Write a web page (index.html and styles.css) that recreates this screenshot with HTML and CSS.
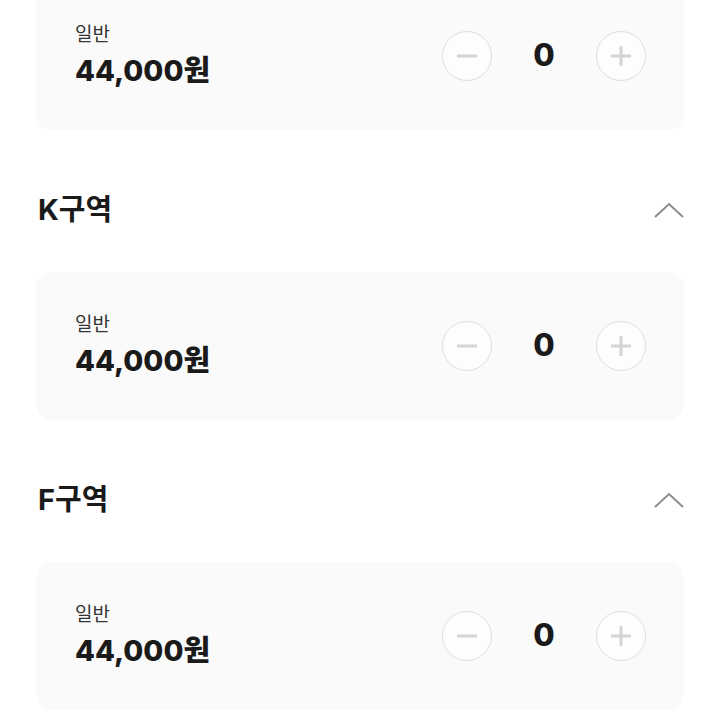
FILE: index.html
```html
<!DOCTYPE html>
<html lang="ko">
<head>
<meta charset="utf-8">
<link rel="stylesheet" href="styles.css">
</head>
<body>
<div class="page">
  <div class="card first">
    <div class="info">
      <div class="label">일반</div>
      <div class="price">44,000원</div>
    </div>
    <div class="stepper">
      <button class="btn"><svg viewBox="0 0 20 20" width="20" height="20"><path d="M0 10H20" /></svg></button>
      <div class="count">0</div>
      <button class="btn"><svg viewBox="0 0 20 20" width="20" height="20"><path d="M0 10H20M10 0V20" /></svg></button>
    </div>
  </div>

  <div class="section-head">
    <h2 class="title">K구역</h2>
    <svg class="chev" viewBox="0 0 30 16" width="30" height="16"><path d="M1 15L15 2L29 15" /></svg>
  </div>
  <div class="card">
    <div class="info">
      <div class="label">일반</div>
      <div class="price">44,000원</div>
    </div>
    <div class="stepper">
      <button class="btn"><svg viewBox="0 0 20 20" width="20" height="20"><path d="M0 10H20" /></svg></button>
      <div class="count">0</div>
      <button class="btn"><svg viewBox="0 0 20 20" width="20" height="20"><path d="M0 10H20M10 0V20" /></svg></button>
    </div>
  </div>

  <div class="section-head">
    <h2 class="title">F구역</h2>
    <svg class="chev" viewBox="0 0 30 16" width="30" height="16"><path d="M1 15L15 2L29 15" /></svg>
  </div>
  <div class="card">
    <div class="info">
      <div class="label">일반</div>
      <div class="price">44,000원</div>
    </div>
    <div class="stepper">
      <button class="btn"><svg viewBox="0 0 20 20" width="20" height="20"><path d="M0 10H20" /></svg></button>
      <div class="count">0</div>
      <button class="btn"><svg viewBox="0 0 20 20" width="20" height="20"><path d="M0 10H20M10 0V20" /></svg></button>
    </div>
  </div>
</div>
</body>
</html>
```

FILE: styles.css
```css
html, body {
  margin: 0;
  padding: 0;
  background: #ffffff;
  overflow: hidden;
}
body {
  font-family: "Noto Sans CJK KR", "Noto Sans", sans-serif;
  color: #1a1a1a;
}
.page {
  padding: 0 37px 0 36px;
}
.card {
  height: 148px;
  box-sizing: border-box;
  background: #fafafa;
  border-radius: 16px;
  padding: 0 38px 0 39px;
  display: flex;
  align-items: center;
  justify-content: space-between;
}
.card.first {
  margin-top: -18px;
}
.info {
  display: flex;
  flex-direction: column;
  gap: 8px;
  margin-top: -3px;
}
.label {
  font-size: 19px;
  line-height: 24px;
  color: #333333;
}
.price {
  font-family: "Inter", "Noto Sans CJK KR", sans-serif;
  font-size: 29px;
  line-height: 36px;
  font-weight: 800;
  color: #1a1a1a;
}
.stepper {
  display: flex;
  align-items: center;
}
.btn {
  width: 50px;
  height: 50px;
  border-radius: 50%;
  border: 1.5px solid #dedede;
  background: #fdfdfd;
  padding: 0;
  display: flex;
  align-items: center;
  justify-content: center;
}
.btn svg path {
  stroke: #d4d4d4;
  stroke-width: 3;
  fill: none;
}
.count {
  width: 104px;
  text-align: center;
  font-family: "Inter", "Noto Sans CJK KR", sans-serif;
  font-size: 31px;
  font-weight: 800;
  line-height: 36px;
  margin-top: -3px;
  color: #1a1a1a;
}
.section-head {
  display: flex;
  align-items: center;
  justify-content: space-between;
  padding: 60px 0 42px 2px;
}
.title {
  margin: 0;
  font-family: "Inter", "Noto Sans CJK KR", sans-serif;
  font-size: 29px;
  line-height: 40px;
  font-weight: 700;
  color: #1a1a1a;
}
.chev path {
  stroke: #8c8c8c;
  stroke-width: 2;
  fill: none;
}
```
